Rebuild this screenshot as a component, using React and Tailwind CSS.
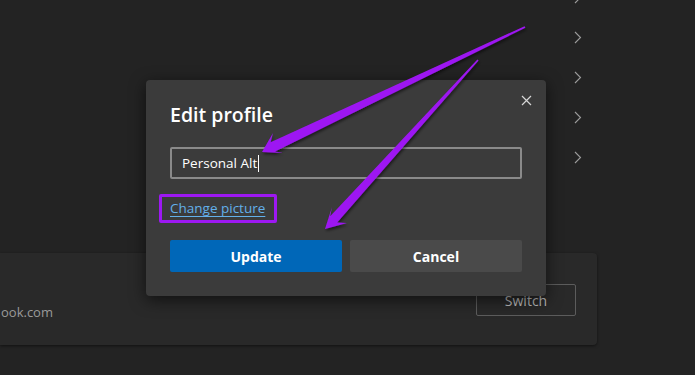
import React from "react";

const Chevron = () => (
  <svg width="8" height="13" viewBox="0 0 8 13" fill="none">
    <polyline points="1,1 6.5,6.5 1,12" stroke="#9c9c9c" strokeWidth="1.1" />
  </svg>
);

const Arrows = () => (
  <svg
    className="absolute inset-0 pointer-events-none"
    width="695"
    height="375"
    viewBox="0 0 695 375"
  >
    <defs>
      <filter id="shadow" x="-10%" y="-10%" width="120%" height="120%">
        <feDropShadow dx="1" dy="2" stdDeviation="1.5" floodColor="#000" floodOpacity="0.55" />
      </filter>
    </defs>
    <g fill="#9d18f2" filter="url(#shadow)">
      {/* long arrow to the name field */}
      <polygon points="524.6,26.2 270.6,142.2 273,133 262,152 283,153 275,151.4 525.4,27.8" />
      {/* arrow to the Update button */}
      <polygon points="477.4,59.4 330.2,216.2 332,207 325,229 347,223 337.2,222.6 478.6,60.6" />
    </g>
  </svg>
);

export default function App() {
  const rows = [0, 1, 2, 3, 4];

  return (
    <div
      className="relative w-[695px] h-[375px] overflow-hidden bg-[#232323]"
      style={{ fontFamily: '"Open Sans", "Noto Sans", sans-serif' }}
    >
      {/* settings list behind the dialog */}
      <div className="flex flex-col -mt-[23px] w-[597px]">
        {rows.map((r) => (
          <div key={r} className="h-10 flex items-center justify-end pr-[15px]">
            <Chevron />
          </div>
        ))}
      </div>

      {/* profile card */}
      <div className="mt-[76px] w-[597px] h-[92px] bg-[#292929] rounded-r-[4px] shadow-[0_1px_3px_rgba(0,0,0,0.5)] flex items-center justify-between pr-[21px]">
        <span className="text-[13px] text-[#9a9a9a] mt-[27px] pl-px">ook.com</span>
        <button className="w-[100px] h-[32px] border border-[#5c5c5c] rounded-[2px] text-[14px] text-[#bdbdbd] mt-[2px]">
          Switch
        </button>
      </div>

      {/* Edit profile dialog */}
      <div className="absolute left-[146px] top-[80px] w-[400px] h-[216px] bg-[#3b3b3b] rounded-[4px] shadow-[0_4px_16px_rgba(0,0,0,0.6)] px-6 pt-[22px]">
        <button className="absolute right-[14px] top-[14px] w-[12px] h-[12px] flex items-center justify-center">
          <svg width="11" height="11" viewBox="0 0 11 11">
            <path d="M1 1L10 10M10 1L1 10" stroke="#d6d6d6" strokeWidth="1.2" />
          </svg>
        </button>

        <h2 className="text-[19.5px] font-semibold text-white leading-[26px]">Edit profile</h2>

        <div className="mt-[19px] h-[32px] border-2 border-[#8a8a8a] rounded-[2px] flex items-center px-[10px]">
          <span className="text-[13.5px] text-white">Personal Alt</span>
          <span className="w-px h-[17px] bg-white ml-[1px]" />
        </div>

        <div className="mt-[15px] -ml-[11px] w-[118px] h-[29px] border-[3px] border-[#9d18f2] rounded-[2px] flex items-center pl-[8px]">
          <span className="text-[13.5px] text-[#63b0ea] underline underline-offset-[3px] decoration-1">
            Change picture
          </span>
        </div>

        <div className="mt-[17px] flex gap-2">
          <button className="flex-1 h-[32px] bg-[#0067b8] rounded-[2px] text-[14px] font-bold text-white">
            Update
          </button>
          <button className="flex-1 h-[32px] bg-[#4a4a4a] rounded-[2px] text-[14px] font-bold text-white">
            Cancel
          </button>
        </div>
      </div>

      <Arrows />
    </div>
  );
}
